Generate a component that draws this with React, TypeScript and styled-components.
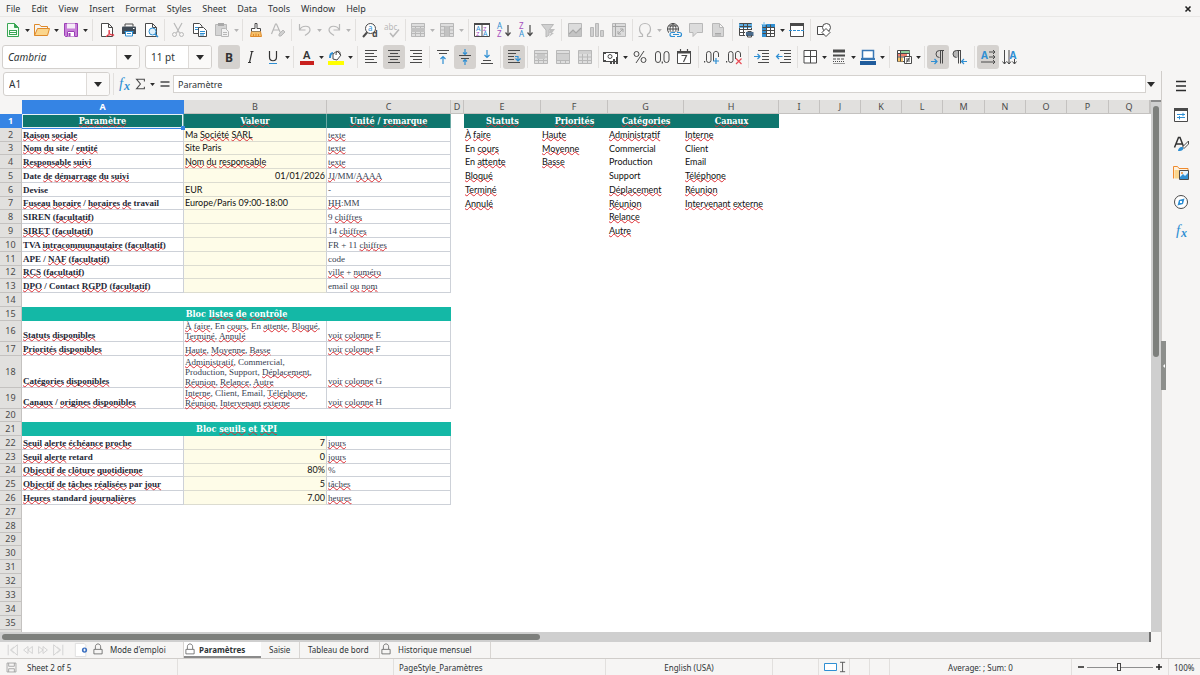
import React from "react";
import styled, { createGlobalStyle, css } from "styled-components";

const ui = `"Noto Sans", "Open Sans", sans-serif`;
const serif = `"Liberation Serif", serif`;
const slab = `"DejaVu Serif Condensed", "DejaVu Serif", serif`;
const sans = `Lato, "Open Sans", sans-serif`;

const Global = createGlobalStyle`
  *, *::before, *::after { box-sizing: border-box; }
  body { margin: 0; font-family: ${ui}; font-size: 9px; color: #2e3436; background: #f6f5f4; }
  button, input, select { font: inherit; color: inherit; margin: 0; }
  button { border: 0; padding: 0; background: none; }
`;

/* ---------- icons, all drawn in a 16 x 16 box ---------- */
const K = "#4a4a4a";
const B = "#2f8fd3";
const G = "#b8b8b8";
const P = "#a54fbd";

const s = (d: string, c: string = K, w = 1) => <path d={d} stroke={c} strokeWidth={w} fill="none" />;
const f = (d: string, c: string = K) => <path d={d} fill={c} />;
const letter = (x: number, y: number, size: number, c: string, t: string, fam: string = ui, extra: React.SVGProps<SVGTextElement> = {}) => (
  <text x={x} y={y} fontSize={size} fill={c} fontFamily={fam} {...extra}>{t}</text>
);
const doc = (c: string, fill = "#fff") => <path d="M2.5 1.5h7l4 4v9h-11zM9.5 1.5v4h4" fill={fill} stroke={c} />;
const tableGrey = (
  <>
    {f("M1 1h14v14H1z", "#dedede")}
    {s("M1.500 1.500h13v13h-13zM1.500 4.500h13M1.500 8h13M1.500 11.500h13M5.500 4.500v10M10.500 4.500v10", G)}
  </>
);

const icons: Record<string, React.ReactNode> = {
  newDoc: <>{doc("#3aa655", "#f4fff4")}{f("M9.500 1.500l4 4h-4z", "#3aa655")}{f("M4 8h8v5H4z", "#3aa655")}{s("M5 9.500h6M5 11.500h6", "#fff")}</>,
  open: <>{s("M.5 13.500v-11h5l1.500 2h6.500v2", "#df8a2a")}<path d="M3.500 6.500h12l-2 7h-13z" fill="#fbd68d" stroke="#df8a2a" /></>,
  save: <><path d="M1.500 1.500h13v13h-12l-1-1z" fill="#c77fd8" stroke="#9b3fb5" />{f("M4 1.500h8v5H4z", "#f5ecf8")}{f("M4 9h8v5.500H4z", "#fff")}{s("M4.500 9.500h7v5M4.500 9.500v5", "#9b3fb5")}{f("M5.500 11h2v3.500h-2z", "#9b3fb5")}</>,
  pdf: <>{doc(K)}{s("M7 15c3-3 4-5 3.500-6.500S9 10 11 12s4 2 4 1-4-1-8 1.500", "#e0303f", 1)}</>,
  print: <>{s("M4 4.500v-2.500h8v2.500", K)}{f("M1 5.500q0-1 1-1h12q1 0 1 1V12H1z", "#3f4a55")}{f("M4 9h8v5H4z", "#fff")}{s("M3.500 9.500h9M4.500 9.500v4.500h7v-4.500M6 11.500h4", B)}{f("M12 6h1.500v1H12z", "#fff")}</>,
  preview: <>{doc(K)}<circle cx="9.500" cy="9.500" r="3.500" fill="#dff0fb" stroke={B} />{s("M12 12l3 3", B, 1.500)}</>,
  cut: <>{s("M4 1l5.500 10M12 1L6.500 11", G, 1.200)}<circle cx="4.500" cy="12.500" r="2" fill="none" stroke={G} /><circle cx="11.500" cy="12.500" r="2" fill="none" stroke={G} /></>,
  copy: <><path d="M1.500 1.500h6l2.500 2.500v7.500h-8.500z" fill="#fff" stroke={K} />{s("M3 5.500h4M3 7.500h4", B)}<path d="M6.500 5.500h5l3 3v6h-8z" fill="#fff" stroke={K} />{s("M8 9.500h5M8 11.500h5M8 13h4", B)}</>,
  paste: <><path d="M1.500 2.500h11v11h-11z" fill="#d4d4d4" stroke={G} />{f("M4 1h6v3H4z", "#a9a9a9")}<path d="M7.500 6.500h4l3 3v5h-7z" fill="#f2f2f2" stroke={G} />{s("M9 10.500h4M9 12.500h4", G)}</>,
  brush: <><path d="M7 1.500h2v5h3.500v3h-9v-3H7z" fill="#fff" stroke={K} />{f("M3.500 9.500h9l1 5h-11z", "#f6c06a")}{s("M3.500 9.500l-1 5h11l-1-5M5.500 14v-2M8 14v-2.500M10.500 14v-2", "#df8a2a")}</>,
  clear: <>{s("M1.500 12L5.500 2h1l4 9M3 8h6", G, 1.200)}<path d="M9 12l4-4 2 2-4 4H9z" fill="#d0d0d0" stroke={G} /></>,
  undo: <>{s("M2.500 2v6h6M2.500 8C5 3 13 3 13 8c0 3-3 4-5 5.500", G, 1.200)}</>,
  redo: <>{s("M13.500 2v6h-6M13.500 8C11 3 3 3 3 8c0 3 3 4 5 5.500", G, 1.200)}</>,
  find: <><circle cx="8.500" cy="6.500" r="5" fill="#fff" stroke={K} />{s("M5 10.500L1 15", K, 2)}{letter(6, 9, 8, B, "a")}{letter(10, 15, 9, K, "d", ui, { fontWeight: 700 })}</>,
  spell: <>{letter(0, 8, 8, G, "abc")}{s("M6 11l3 3.500 6-7", G, 1.500)}</>,
  rowIns: <>{tableGrey}{f("M1 6h14v4H1z", "#c2c2c2")}</>,
  colIns: <>{tableGrey}{f("M6 4h4v11H6z", "#c2c2c2")}</>,
  sort: <><path d="M.5 1.500h15v13H.5z" fill="#fff" stroke={K} />{f("M0 1h16v2H0z", K)}{s("M8 2v13", K)}{letter(2, 9, 7, B, "A")}{letter(2, 14, 6, P, "Z")}{letter(9, 9, 6, P, "Z")}{letter(9, 14, 7, B, "A")}</>,
  az: <>{letter(1, 7, 8, B, "A")}{letter(1, 15, 8, P, "Z")}{s("M12 3v10M9.500 10.500L12 13.500l2.500-3", K, 1.200)}</>,
  za: <>{letter(1, 7, 8, P, "Z")}{letter(1, 15, 8, B, "A")}{s("M12 3v10M9.500 10.500L12 13.500l2.500-3", K, 1.200)}</>,
  filter: <><path d="M1.500 2.500h12l-4.500 5.500v5l-3 2V8z" fill="#d0d0d0" stroke={G} />{f("M10 7h5l-3 4h2l-5 4 2-4H9z", "#c0c0c0")}</>,
  image: <><path d="M1.500 1.500h13v13h-13z" fill="#dcdcdc" stroke={G} />{f("M2 14v-2l4-4 3 3 5-5v8z", "#c4c4c4")}{s("M2 12l4-4 3 3 5-5", "#a8a8a8", 1.200)}</>,
  chart: <><path d="M1.500 5.500h3v9h-3zM6.500 1.500h3v13h-3zM11.500 8.500h3v6h-3z" fill="#d0d0d0" stroke={G} /></>,
  pivot: <><path d="M1.500 1.500h13v13h-13z" fill="#dcdcdc" stroke={G} />{s("M1.500 4.500h13M4.500 1.500v13M7 12l5-5M12 10V7H9M7 9v3h3", "#a8a8a8")}</>,
  omega: <>{s("M1.500 14.500h4v-2C3 11 2.500 9 2.500 7 2.500 4 4.500 1.500 8 1.500S13.500 4 13.500 7c0 2-.5 4-3 5.500v2h4", G, 1.200)}</>,
  link: <><circle cx="7" cy="7" r="5.500" fill="#fff" stroke={K} />{s("M1.500 7h11M7 1.500v11M2.500 4h9M2.500 10h9M7 1.500c-4 3-4 8 0 11M7 1.500c4 3 4 8 0 11", K)}{f("M3 9.500h13v6H3z", "#f6f5f4")}{s("M9 10.500H6a2 2 0 000 4h3M11 10.500h2.500a2 2 0 010 4H11M7 12.500h6", B, 1.200)}</>,
  comment: <><path d="M1.500 1.500h13v9H9l-4 4v-4H1.500z" fill="#dcdcdc" stroke={G} /></>,
  headerFooter: <>{doc(G, "#d6d6d6")}{s("M5 11.500h6M5 13h6", "#a8a8a8")}</>,
  printArea: <><path d="M1.500 1.500h12v12h-12z" fill="#fff" stroke={K} />{f("M1 1h13v5H1z", "#5fb0e6")}{s("M1.500 1.500h12M1.500 4.500h12M1.500 7.500h12M1.500 10.500h12M5.500 1.500v12M9.500 1.500v12", K)}{f("M7 8h9v8H7z", "#f6f5f4")}{f("M8 10h7.500v4H8z", "#4a6a8a")}{s("M9.500 9.500h4M9.500 13v2h4v-2", K)}</>,
  freeze: <><path d="M2.500 2.500h12v12h-12z" fill="#fff" stroke={K} />{f("M2 2h13v3.500H2zM2 2h4v13H2z", B)}{s("M2.500 5.500h12M2.500 8.500h12M2.500 11.500h12M6.500 2.500v12M10.500 2.500v12", K)}{s("M4 0v5M1.500 2.500h5", "#7cc0ec")}</>,
  split: <><path d="M1.500 1.500h13v13h-13z" fill="#fff" stroke={K} />{f("M1 1h14v3H1z", K)}<path d="M0 8.500h16" stroke={B} strokeDasharray="3 1" /></>,
  shapes: <><path d="M1.500 4.500h8v8h-8z" fill="#fff" stroke={K} /><circle cx="10.500" cy="5.500" r="4" fill="#fff" stroke={K} /><path d="M10 6.500l4 4-4 4-4-4z" fill="#fff" stroke={K} /></>,

  bold: <>{letter(4, 12.500, 12, "#333", "B", ui, { fontWeight: 700 })}</>,
  italic: <>{s("M7.500 2.500h3M5 13.500h3M9 2.500L6.500 13.500", "#333", 1.200)}</>,
  underline: <>{s("M4.500 2v6c0 5 7 5 7 0V2", "#333", 1.200)}{s("M4 14.500h8", B)}</>,
  fontColor: <>{letter(4, 10, 11, "#333", "A", ui, { fontWeight: 600 })}{f("M1 12h14v4H1z", "#c9211e")}</>,
  highlight: <>{s("M2 9c0-4 1-5 3-5", B, 2)}<path d="M5 5l4-3 4 4-4 5-4-1z" fill="#fff" stroke={K} />{s("M8 6c0-5 5-5 4 0", K)}{f("M0 12h16v4H0z", "#ffff00")}</>,
  left: <>{s("M1 1.500h12M1 4.500h9M1 7.500h12M1 10.500h9M1 13.500h12")}</>,
  center: <>{s("M2 1.500h12M4 4.500h8M2 7.500h12M4 10.500h8M2 13.500h12")}</>,
  right: <>{s("M2 1.500h12M5 4.500h9M2 7.500h12M5 10.500h9M2 13.500h12")}</>,
  top: <>{s("M2 1.500h12M4 4.500h8")}{s("M8 15V8M5.500 10L8 7.500l2.500 2.500", B, 1.200)}</>,
  middle: <>{s("M2 6.500h12M4 9.500h8")}{s("M8 0v5M6 3.500l2 2 2-2M8 16v-5M6 12.500l2-2 2 2", B, 1.200)}</>,
  bottom: <>{s("M2 14.500h12M4 11.500h8")}{s("M8 1v7M5.500 6L8 8.500 10.500 6", B, 1.200)}</>,
  wrap: <>{s("M2 1.500h12M2 4.500h8M2 7.500h6M2 10.500h6M2 13.500h12")}{s("M9 7.500h3v4M9.500 9.500l2.500 2.500 2.500-2.500", B, 1.200)}</>,
  merge1: <>{tableGrey}{f("M4 5h8v5H4z", "#c8c8c8")}</>,
  merge2: <>{tableGrey}{f("M2 5h12v6H2z", "#d0d0d0")}</>,
  merge3: <>{tableGrey}{f("M2 2h12v3H2z", "#d0d0d0")}</>,
  currency: <><path d="M.5 3.500h14v9H.5z" fill="#fff" stroke={K} />{f("M0 3h3v2H0zM12 3h3v2h-3zM0 11h3v2H0z")}<circle cx="7" cy="7.500" r="2" fill="none" stroke={K} />{f("M7 12h2v3H7zM10 10h2v5h-2zM13 8h2v7h-2z")}</>,
  percent: <><circle cx="4.500" cy="5" r="2.500" fill="none" stroke={K} /><circle cx="11.500" cy="11" r="2.500" fill="none" stroke={K} />{s("M12 2L4 14")}</>,
  number: <><rect x="1.500" y="2.500" width="5" height="11" rx="2.500" fill="none" stroke={K} /><rect x="10" y="2.500" width="5" height="11" rx="2.500" fill="none" stroke={K} />{f("M7.700 12.500h1.200v2H7.700z")}</>,
  date: <><path d="M1.500 2.500h13v12h-13z" fill="#fff" stroke={K} />{f("M1 2h14v2.500H1z")}{s("M4.500 0v3M11.500 0v3M5.500 6.500h5l-3 6.500", K, 1.200)}</>,
  decAdd: <>{f("M0 12h1.200v1.500H0z")}<rect x="2.500" y="2.500" width="4.500" height="11" rx="2.200" fill="none" stroke={K} /><path d="M9.500 10V5c0-3.500 5-3.500 5 0v3M9.500 9v3" fill="none" stroke={K} />{s("M12 9v6M9 12h6", B, 1.200)}</>,
  decDel: <>{f("M0 12h1.200v1.500H0z")}<rect x="2.500" y="2.500" width="4.500" height="11" rx="2.200" fill="none" stroke={K} /><path d="M9.500 10V5c0-3.500 5-3.500 5 0v3" fill="none" stroke={K} />{s("M10 9.500l5.500 5.500M15.500 9.500L10 15", "#e84b55", 1.200)}</>,
  indentMore: <>{s("M4 1.500h11M8 4.500h7M8 7.500h7M8 10.500h7M4 13.500h11")}{s("M0 7.500h6M3.500 5L6 7.500 3.500 10", B, 1.200)}</>,
  indentLess: <>{s("M4 1.500h11M8 4.500h7M8 7.500h7M8 10.500h7M4 13.500h11")}{s("M6.500 7.500H.5M3 5L.5 7.500 3 10", B, 1.200)}</>,
  borders: <><path d="M2 1.500h12.500v12.500H2zM2 7.500h12.500M8.500 1.500v12.500" fill="#fff" stroke={K} /></>,
  borderStyle: <>{s("M2 2h12", K, 3)}{s("M2 6.500h12", K, 2)}<path d="M2 10h12" stroke={K} strokeDasharray="3 1" /><path d="M2 12.500h12" stroke={K} strokeDasharray="1 1" />{s("M2 14.500h12", "#999")}</>,
  bg: <>{f("M1 9h14v2H1z", "#3a78b5")}<path d="M2.500 1.500h11v8h-11z" fill="#fff" stroke="#3a78b5" strokeWidth="1.500" />{f("M0 12h16v4H0z", "#205c9c")}</>,
  cond: <><path d="M1.500 1.500h12v11h-12z" fill="#fff" stroke={K} />{f("M4 2h9.500v2.500H4z", "#8fd19e")}{f("M2 5h9v2.500H2z", "#f0806e")}{f("M2 8.500h5v4H2z", "#f7c46c")}{s("M1.500 4.500h12M1.500 8h12M4.500 1.500v11")}<path d="M8.500 7.500h7v7h-7z" fill="#fff" stroke={K} />{s("M10 10h4M10 12h4M13.500 8.500l-3 5")}</>,
  ltr: <>{s("M14 1.500H9.500a3.500 3.500 0 000 7M10.500 1.500v13M12.500 1.500v13", K)}{s("M1 12.500h6M4.500 10L7 12.500 4.500 15", B, 1.200)}</>,
  rtl: <>{f("M8 1.500H4.500a3.500 3.500 0 000 7H6.500V1.500z", "#b5b5b5")}{s("M9 1.500H4.500a3.500 3.500 0 000 7M6.500 1.500v13M8.500 1.500v13", K)}{s("M15 12.500h-5M12 10l-2.500 2.500L12 15", B, 1.200)}</>,
  lr: <>{letter(1, 9.500, 10, B, "A", ui, { fontWeight: 700 })}{s("M9 3h6M13 1l2 2-2 2M9 8h6M13 6l2 2-2 2M1 13h14M13 11l2 2-2 2")}</>,
  tb: <>{s("M2.500 1v14M.5 12.500L2.500 15l2-2.500M7 1v14M5 12.500L7 15l2-2.500M12.500 10v5M10.500 12.500l2 2.500 2-2.500")}{letter(7.500, 9.500, 10, B, "A", ui, { fontWeight: 700 })}</>,

  fx: <>{letter(3, 12, 15, B, "f", serif, { fontStyle: "italic" })}{letter(8, 14, 12, B, "x", serif, { fontStyle: "italic", fontWeight: 700 })}</>,
  sigma: <>{s("M13 5V2.500H4l4.500 5.500L4 13.500h9V11", K, 1.200)}</>,
  equals: <>{s("M3.500 6h9M3.500 10h9", K, 1.500)}</>,

  menu: <>{s("M3 3.500h10M3 8h10M3 12.500h10", "#2b2b2b", 1.600)}</>,
  properties: <><path d="M1.500 1.500h13v13h-13z" fill="#fff" stroke={K} />{f("M1 1h14v3H1z")}{s("M4 7.500h8M4 10.500h8M10 5.800v3.400M6.500 9v3.400", B)}</>,
  stylesDeck: <>{s("M1.500 11.500L5.500 1.500h1.500l3.500 9M3 8h6", "#333", 1.500)}<path d="M15.500 5L9.500 11l1.500 1.500L15.500 8z" fill="#fff" stroke={K} />{f("M5 15c0-3 3-5 5-3.500 1.500 2-2 4-5 3.500z", B)}</>,
  gallery: <><path d="M.5 13.500v-12h4l1.500 2h9v3" fill="#fff3e0" stroke="#ee8a2f" />{f("M1.500 5h8v8.500h-8z", "#fbd68d")}<path d="M6.500 5.500h9v9h-9z" fill="#e6f3fc" stroke={K} />{f("M7 14v-2l3-3 2 2 3-3v6z", B)}<circle cx="9" cy="8" r="1" fill="#ee8a2f" /></>,
  navigator: <><circle cx="8" cy="8" r="6.500" fill="#fff" stroke={K} /><path d="M11.500 4.500L10 10l-5.500 1.500L6 6z" fill={B} />{f("M7 7h2v2H7z", "#fff")}</>,

  docSave: <>{s("M2.500 2.500h11v11h-11zM4.500 2.500v4h7v-4M4.500 13.500v-4h7v4", "#9a9a9a")}</>,
  lock: <>{s("M4.500 8V5c0-5 7-5 7 0v3M2.500 8.500h11v6h-11z", "#555")}</>,
  addSheet: <><path d="M1.500.5h10l2 2v13h-12z" fill="#fff" stroke="#ddd" /><circle cx="12" cy="8" r="3" fill="#3a6fc0" />{s("M10.500 8h3M12 6.500v3", "#fff")}</>,
  first: <>{s("M2.500 2v12M13 2L6 8l7 6V2M9 4.500L5 8l4 3.500", "#cfcfcf")}</>,
  prev: <>{s("M13 4L8 8l5 4V4M8 4L3 8l5 4V4", "#cfcfcf")}</>,
  next: <>{s("M3 4l5 4-5 4V4M8 4l5 4-5 4V4", "#cfcfcf")}</>,
  last: <>{s("M13.500 2v12M3 2l7 6-7 6V2M7 4.500L11 8l-4 3.500", "#cfcfcf")}</>,
};

const Svg = styled.svg<{ $size?: number }>`
  width: ${(p) => p.$size ?? 16}px;
  height: ${(p) => p.$size ?? 16}px;
  flex: none;
  display: block;
  overflow: visible;
`;
const Icon = ({ name, size }: { name: string; size?: number }) => (
  <Svg viewBox="0 0 16 16" $size={size} aria-hidden="true">{icons[name]}</Svg>
);
const CaretSvg = styled.svg<{ $large?: boolean }>`
  width: ${(p) => (p.$large ? 8 : 5)}px;
  height: ${(p) => (p.$large ? 5 : 3)}px;
  display: block;
`;
const Caret = ({ off, large }: { off?: boolean; large?: boolean }) => (
  <CaretSvg viewBox="0 0 8 5" $large={large} aria-hidden="true">
    <path d="M0 0h8L4 5z" fill={off ? "#b5b5b5" : "#2b2b2b"} />
  </CaretSvg>
);

/* ---------- frame ---------- */
const Window = styled.div`
  display: flex;
  flex-direction: column;
  height: 100vh;
  overflow: hidden;
`;
const MenuBar = styled.nav`
  display: flex;
  align-items: center;
  gap: 11px;
  height: 17px;
  padding: 1px 6px 0;
  border-bottom: 1px solid #e9e8e6;
`;
const MenuItem = styled.button`
  line-height: 14px;
`;
const CloseButton = styled.button`
  display: grid;
  place-items: center;
  width: 12px;
  height: 12px;
  margin-left: auto;
`;
const Toolbar = styled.div<{ $h: number }>`
  display: flex;
  align-items: center;
  height: ${(p) => p.$h}px;
  padding: 0 2px;
`;
const ToolButton = styled.button<{ $on?: boolean }>`
  display: grid;
  place-items: center;
  flex: none;
  width: 22px;
  height: 24px;
  border-radius: 3px;
  ${(p) => p.$on && css`background: #d5d2cf;`}
`;
const CaretButton = styled.button`
  display: grid;
  place-items: center;
  flex: none;
  width: 7px;
  height: 24px;
`;
const Divider = styled.span<{ $w: number }>`
  flex: none;
  display: flex;
  justify-content: center;
  width: ${(p) => p.$w}px;
  height: 22px;
  &::before {
    content: "";
    width: 1px;
    background: #e2e0de;
  }
`;
const Combo = styled.label<{ $w: number; $gap: number }>`
  position: relative;
  display: flex;
  flex: none;
  width: ${(p) => p.$w}px;
  height: 24px;
  margin-right: ${(p) => p.$gap}px;
  border: 1px solid #d3d0cd;
  border-radius: 3px;
  background: #fff;
  overflow: hidden;
`;
const ComboSelect = styled.select<{ $italic?: boolean }>`
  appearance: none;
  width: 100%;
  border: 0;
  outline: 0;
  padding: 0 24px 0 5px;
  background: transparent;
  font-size: 10px;
  font-style: ${(p) => (p.$italic ? "italic" : "normal")};
`;
const ComboArrow = styled.span`
  position: absolute;
  inset: 0 0 0 auto;
  display: grid;
  place-items: center;
  width: 23px;
  border-left: 1px solid #dedbd8;
  background: #faf9f8;
  pointer-events: none;
`;
const Middle = styled.div`
  display: flex;
  flex: 1;
  min-height: 0;
`;
const Main = styled.main`
  display: flex;
  flex-direction: column;
  flex: 1;
  min-width: 0;
`;
const FormulaBar = styled.div`
  display: flex;
  align-items: center;
  height: 29px;
  padding: 0 5px 3px 3px;
`;
const SmallButton = styled.button<{ $w: number }>`
  display: grid;
  place-items: center;
  flex: none;
  width: ${(p) => p.$w}px;
  height: 22px;
`;
const FormulaInput = styled.input`
  flex: 1;
  min-width: 0;
  height: 18px;
  padding: 0 4px;
  border: 1px solid #d5d2cf;
  border-radius: 0;
  outline: 0;
  background: #fff;
`;
const SheetArea = styled.div`
  display: flex;
  flex: 1;
  min-height: 0;
`;
const GridPane = styled.div`
  flex: 1;
  min-width: 0;
  overflow: hidden;
  background: #fff;
`;
const VTrack = styled.div`
  width: 10px;
  padding: 4px 2px;
  background: #cfcfcf;
  border-top: 2px solid #8b8b8b;
`;
const VThumb = styled.div`
  width: 6px;
  height: 48%;
  border-radius: 3px;
  background: #7d7f7c;
`;
const HTrack = styled.div`
  height: 10px;
  margin-right: 10px;
  padding: 2px;
  background: #cfcfcf;
  border-right: 2px solid #6f6f6f;
`;
const HThumb = styled.div`
  width: 47%;
  height: 6px;
  border-radius: 3px;
  background: #7d7f7c;
`;
const SideBar = styled.aside`
  position: relative;
  display: flex;
  flex-direction: column;
  align-items: center;
  gap: 5px;
  flex: none;
  width: 39px;
  padding-top: 3px;
  border-left: 1px solid #d0cdca;
`;
const SideButton = styled.button`
  display: grid;
  place-items: center;
  width: 24px;
  height: 24px;
`;
const SideHandle = styled.span`
  position: absolute;
  top: 46%;
  left: -1px;
  display: grid;
  place-items: center;
  width: 5px;
  height: 49px;
  background: #8d8f8c;
`;

/* ---------- sheet ---------- */
const Sheet = styled.table`
  width: 100%;
  table-layout: fixed;
  border-collapse: separate;
  border-spacing: 0;
`;
const ColHead = styled.th<{ $on?: boolean }>`
  height: 14px;
  padding: 0;
  border-right: 1px solid #c4c2c0;
  border-bottom: 1px solid #c4c2c0;
  background: #e1e0de;
  color: #4a4a4a;
  font-weight: 400;
  line-height: 12px;
  ${(p) => p.$on && css`background: #3584e4; border-color: #3584e4; color: #fff; font-weight: 700;`}
`;
const Corner = styled.td`
  padding: 0;
  background: #f6f5f4;
`;
const RowHead = styled(ColHead)<{ $h: number }>`
  height: ${(p) => p.$h}px;
`;
const line = "1px solid #cdd1d8";
const kinds = {
  head: css`background: #0f766e; color: #fff; font: 700 9px/13px ${slab}; text-align: center; border-right: 1px solid #6ba9a4;`,
  listHead: css`background: #0f766e; color: #fff; font: 700 9px/13px ${slab}; text-align: center;`,
  block: css`background: #14b8a6; color: #fff; font: 700 9px/13px ${slab}; text-align: center;`,
  label: css`font: 700 9px/11px ${serif}; color: #1f2937; border-right: ${line}; border-bottom: ${line};`,
  value: css`font: 9px/12px ${sans}; color: #111; background: #fefce8; vertical-align: middle; border-right: ${line}; border-bottom: 1px solid #dcdcd0;`,
  number: css`font: 9px/12px ${sans}; color: #111; background: #fefce8; vertical-align: middle; text-align: right; border-right: ${line}; border-bottom: 1px solid #dcdcd0;`,
  note: css`font: 9px/11px ${serif}; color: #374151; border-right: ${line}; border-bottom: ${line};`,
  wrapped: css`font: 9px/10px ${serif}; color: #374151; border-right: ${line}; border-bottom: ${line};`,
  list: css`font: 9px/12px ${sans}; color: #111; vertical-align: middle;`,
  blank: css``,
};
type Kind = keyof typeof kinds;
const Cell = styled.td<{ $kind: Kind; $active?: boolean }>`
  padding: 0 1px;
  vertical-align: bottom;
  white-space: pre;
  ${(p) => kinds[p.$kind]}
  ${(p) => p.$active && css`position: relative; box-shadow: inset 0 0 0 1px #e8f2f8, 0 1px 0 #3584e4;`}
`;
const FillHandle = styled.span`
  position: absolute;
  right: -2px;
  bottom: -2px;
  width: 4px;
  height: 4px;
  background: #3584e4;
`;
const Misspelt = styled.span`
  text-decoration: underline wavy #dc2f35 1px;
  text-decoration-skip-ink: none;
  text-underline-offset: -1px;
`;

/* "~" in front of a word marks it for the spelling checker */
const spell = (t: string) =>
  t.split(/(~[\p{L}]+)/u).map((part, i) =>
    part.startsWith("~") ? <Misspelt key={i}>{part.slice(1)}</Misspelt> : part
  );

const columns: [string, number][] = [
  ["A", 162], ["B", 143], ["C", 124], ["D", 13], ["E", 77], ["F", 67], ["G", 76], ["H", 95],
  ["I", 41], ["J", 41], ["K", 41], ["L", 41], ["M", 42], ["N", 41], ["O", 41], ["P", 42], ["Q", 41],
];

const rowHeights = [
  14, 14, 13, 14, 14, 14, 13, 14, 14, 14, 14, 13, 14, 14, 14, 21, 14, 32, 21, 13, 14, 14, 14, 13, 14, 14,
  14, 14, 13, 14, 14, 14, 14, 14, 14, 14,
];

type Block = { kinds: [Kind, Kind, Kind]; cells: [string, string, string] } | { title: string };
const fr = (a: string, b: string, c: string, k: Kind = "value"): Block => ({ kinds: ["label", k, "note"], cells: [a, b, c] });
const blocks: Record<number, Block> = {
  1: { kinds: ["head", "head", "head"], cells: ["~Paramètre", "~Valeur", "~Unité / ~remarque"] },
  2: fr("~Raison ~sociale", "Ma ~Société ~SARL", "~texte"),
  3: fr("~Nom ~du site / ~entité", "Site Paris", "~texte"),
  4: fr("~Responsable ~suivi", "~Nom ~du ~responsable", "~texte"),
  5: fr("Date ~de ~démarrage ~du ~suivi", "01/01/2026", "~JJ/MM/~AAAA", "number"),
  6: fr("Devise", "EUR", "-"),
  7: fr("~Fuseau ~horaire / ~horaires ~de travail", "Europe/Paris 09:00-18:00", "~HH:MM"),
  8: fr("SIREN (~facultatif)", "", "9 ~chiffres"),
  9: fr("~SIRET (~facultatif)", "", "14 ~chiffres"),
  10: fr("TVA ~intracommunautaire (~facultatif)", "", "FR + 11 ~chiffres"),
  11: fr("APE / ~NAF (~facultatif)", "", "code"),
  12: fr("~RCS (~facultatif)", "", "~ville + ~numéro"),
  13: fr("~DPO / Contact ~RGPD (~facultatif)", "", "email ~ou ~nom"),
  15: { title: "Bloc ~listes ~de ~contrôle" },
  16: fr("~Statuts ~disponibles", "~À ~faire, En ~cours, En ~attente, ~Bloqué,\n~Terminé, ~Annulé", "~voir ~colonne E", "wrapped"),
  17: fr("~Priorités ~disponibles", "~Haute, ~Moyenne, ~Basse", "~voir ~colonne F", "wrapped"),
  18: fr("~Catégories ~disponibles", "~Administratif, Commercial,\nProduction, Support, ~Déplacement,\n~Réunion, ~Relance, ~Autre", "~voir ~colonne G", "wrapped"),
  19: fr("~Canaux / ~origines ~disponibles", "~Interne, Client, Email, ~Téléphone,\n~Réunion, ~Intervenant ~externe", "~voir ~colonne H", "wrapped"),
  21: { title: "Bloc ~seuils ~et ~KPI" },
  22: fr("~Seuil ~alerte ~échéance ~proche", "7", "~jours", "number"),
  23: fr("~Seuil ~alerte retard", "0", "~jours", "number"),
  24: fr("~Objectif ~de ~clôture ~quotidienne", "80%", "%", "number"),
  25: fr("~Objectif ~de ~tâches ~réalisées par ~jour", "5", "~tâches", "number"),
  26: fr("~Heures standard ~journalières", "7.00", "~heures", "number"),
};
const lists: string[][] = [
  ["~Statuts", "~À ~faire", "En ~cours", "En ~attente", "~Bloqué", "~Terminé", "~Annulé"],
  ["~Priorités", "~Haute", "~Moyenne", "~Basse"],
  ["~Catégories", "~Administratif", "Commercial", "Production", "Support", "~Déplacement", "~Réunion", "~Relance", "~Autre"],
  ["~Canaux", "~Interne", "Client", "Email", "~Téléphone", "~Réunion", "~Intervenant ~externe"],
];

const SheetRow = ({ n, h }: { n: number; h: number }) => {
  const b = blocks[n];
  return (
    <tr>
      <RowHead scope="row" $h={h} $on={n === 1}>{n}</RowHead>
      {!b && <Cell $kind="blank" colSpan={3} />}
      {b && "title" in b && <Cell $kind="block" colSpan={3}>{spell(b.title)}</Cell>}
      {b && "cells" in b && b.cells.map((t, i) => (
        <Cell key={i} $kind={b.kinds[i]} $active={n === 1 && i === 0}>
          {spell(t)}
          {n === 1 && i === 0 && <FillHandle />}
        </Cell>
      ))}
      <Cell $kind="blank" />
      {lists.map((l, i) => (
        <Cell key={i} $kind={n === 1 ? "listHead" : "list"}>{l[n - 1] ? spell(l[n - 1]) : null}</Cell>
      ))}
      <Cell $kind="blank" colSpan={10} />
    </tr>
  );
};

/* ---------- bottom ---------- */
const TabBar = styled.div`
  display: flex;
  align-items: stretch;
  height: 16px;
  padding-left: 5px;
  font-size: 8px;
`;
const TabNav = styled.button`
  display: grid;
  place-items: center;
  width: 15px;
`;
const AddTab = styled.button`
  display: grid;
  place-items: center;
  width: 14px;
  margin: 0 4px 0 9px;
`;
const Tab = styled.button<{ $w: number; $on?: boolean }>`
  display: flex;
  align-items: center;
  justify-content: flex-start;
  gap: 3px;
  width: ${(p) => p.$w}px;
  padding-bottom: 2px;
  border-right: 1px solid #d8d5d2;
  ${(p) => p.$on && css`background: #fff; font-weight: 700; border-right: 0; box-shadow: inset 0 -2px #8b8b8b;`}
`;
const TabText = styled.span<{ $pad: number }>`
  padding-left: ${(p) => p.$pad}px;
  white-space: nowrap;
`;
const StatusBar = styled.footer`
  display: grid;
  grid-template-columns: 22px 156px 216px 212px 167px 46px 31px 20px 20px 1fr 97px 31px;
  height: 17px;
  border-top: 1px solid #d0cdca;
  font-size: 8px;
`;
const Status = styled.div<{ $align?: string; $plain?: boolean }>`
  display: flex;
  align-items: center;
  justify-content: ${(p) => p.$align ?? "flex-start"};
  padding: 0 5px;
  margin-bottom: 1px;
  border-right: ${(p) => (p.$plain ? 0 : "1px solid #e2e0de")};
  white-space: nowrap;
`;
const ZoomBox = styled(Status)`
  gap: 2px;
`;
const ZoomSlider = styled.input`
  appearance: none;
  flex: 1;
  min-width: 0;
  height: 12px;
  background: linear-gradient(#8f8f8f, #8f8f8f) center / 100% 1px no-repeat;
  &::-webkit-slider-thumb {
    appearance: none;
    width: 4px;
    height: 8px;
    border: 1px solid #444;
    background: #f6f5f4;
  }
`;

type Tool = { icon: string; caret?: boolean; off?: boolean; on?: boolean; label: string };
type Item = Tool | number;
const it = (icon: string, label: string, o: { caret?: boolean; off?: boolean; on?: boolean } = {}): Tool => ({ icon, label, ...o });

/* a number is a divider of that width */
const standard: Item[] = [
  it("newDoc", "New", { caret: true }), it("open", "Open", { caret: true }), it("save", "Save", { caret: true }), 7,
  it("pdf", "Export as PDF"), it("print", "Print"), it("preview", "Print preview"), 5,
  it("cut", "Cut"), it("copy", "Copy"), it("paste", "Paste", { caret: true, off: true }), 5,
  it("brush", "Clone formatting"), it("clear", "Clear formatting"), 5,
  it("undo", "Undo", { caret: true, off: true }), it("redo", "Redo", { caret: true, off: true }), 7,
  it("find", "Find and replace"), it("spell", "Spelling"), 4,
  it("rowIns", "Row", { caret: true, off: true }), it("colIns", "Column", { caret: true, off: true }), 6,
  it("sort", "Sort"), it("az", "Sort ascending"), it("za", "Sort descending"), it("filter", "AutoFilter"), 5,
  it("image", "Insert image"), it("chart", "Insert chart"), it("pivot", "Pivot table"), 4,
  it("omega", "Special character", { caret: true, off: true }), it("link", "Hyperlink"), it("comment", "Comment"), it("headerFooter", "Headers and footers"), 6,
  it("printArea", "Print area"), it("freeze", "Freeze rows and columns", { caret: true }), it("split", "Split window"), 5,
  it("shapes", "Draw functions"),
];
const formatting: Item[] = [
  it("bold", "Bold", { on: true }), it("italic", "Italic"), it("underline", "Underline", { caret: true }), 5,
  it("fontColor", "Font color", { caret: true }), it("highlight", "Background color", { caret: true }), 7,
  it("left", "Align left"), it("center", "Center", { on: true }), it("right", "Align right"), 5,
  it("top", "Align top"), it("middle", "Center vertically", { on: true }), it("bottom", "Align bottom"), 5,
  it("wrap", "Wrap text", { on: true }), 5,
  it("merge1", "Merge and center"), it("merge2", "Merge cells"), it("merge3", "Unmerge cells"), 4,
  it("currency", "Currency", { caret: true }), it("percent", "Percent"), it("number", "Number"), it("date", "Date"), 6,
  it("decAdd", "Add decimal place"), it("decDel", "Delete decimal place"), 6,
  it("indentMore", "Increase indent"), it("indentLess", "Decrease indent"), 4,
  it("borders", "Borders", { caret: true }), it("borderStyle", "Border style", { caret: true }), it("bg", "Border color", { caret: true }), 7,
  it("cond", "Conditional", { caret: true }), 5,
  it("ltr", "Left to right", { on: true }), it("rtl", "Right to left"), 6,
  it("lr", "Text direction horizontal", { on: true }), it("tb", "Text direction vertical"),
];

const Tools = ({ items }: { items: Item[] }) => (
  <>
    {items.map((x, i) =>
      typeof x === "number" ? <Divider key={i} $w={x} /> : (
        <React.Fragment key={i}>
          <ToolButton type="button" aria-label={x.label} $on={x.on}><Icon name={x.icon} /></ToolButton>
          {x.caret && <CaretButton type="button" aria-label={`${x.label} options`}><Caret off={x.off} /></CaretButton>}
        </React.Fragment>
      )
    )}
  </>
);

const ComboBox = ({ label, value, w, gap, italic }: { label: string; value: string; w: number; gap: number; italic?: boolean }) => (
  <Combo $w={w} $gap={gap}>
    <ComboSelect aria-label={label} defaultValue={value} $italic={italic}><option>{value}</option></ComboSelect>
    <ComboArrow><Caret large /></ComboArrow>
  </Combo>
);

export default function App() {
  return (
    <Window>
      <Global />
      <MenuBar>
        {["File", "Edit", "View", "Insert", "Format", "Styles", "Sheet", "Data", "Tools", "Window", "Help"].map((m) => (
          <MenuItem key={m} type="button">{m}</MenuItem>
        ))}
        <CloseButton type="button" aria-label="Close document">
          <Svg viewBox="0 0 8 8" $size={8}><path d="M1.500 1.500l5 5M6.500 1.500l-5 5" stroke="#222" strokeWidth="1.600" /></Svg>
        </CloseButton>
      </MenuBar>
      <Toolbar $h={26}><Tools items={standard} /></Toolbar>
      <Toolbar $h={28}>
        <ComboBox label="Font name" value="Cambria" w={138} gap={5} italic />
        <ComboBox label="Font size" value="11 pt" w={67} gap={6} />
        <Tools items={formatting} />
      </Toolbar>
      <Middle>
        <Main>
          <FormulaBar>
            <ComboBox label="Name box" value="A1" w={107} gap={1} />
            <Divider $w={5} />
            <SmallButton type="button" aria-label="Function wizard" $w={16}><Icon name="fx" /></SmallButton>
            <SmallButton type="button" aria-label="Select function" $w={16}><Icon name="sigma" size={14} /></SmallButton>
            <SmallButton type="button" aria-label="Function options" $w={9}><Caret /></SmallButton>
            <SmallButton type="button" aria-label="Formula" $w={16}><Icon name="equals" /></SmallButton>
            <FormulaInput aria-label="Input line" defaultValue="Paramètre" />
            <SmallButton type="button" aria-label="Expand formula bar" $w={10}><Caret large /></SmallButton>
          </FormulaBar>
          <SheetArea>
            <GridPane>
              <Sheet>
                <colgroup>
                  <col width={22} />
                  {columns.map(([c, w]) => <col key={c} width={w} />)}
                  <col />
                </colgroup>
                <thead>
                  <tr>
                    <Corner />
                    {columns.map(([c]) => <ColHead key={c} scope="col" $on={c === "A"}>{c}</ColHead>)}
                    <ColHead as="td" />
                  </tr>
                </thead>
                <tbody>{rowHeights.map((h, i) => <SheetRow key={i} n={i + 1} h={h} />)}</tbody>
              </Sheet>
            </GridPane>
            <VTrack><VThumb /></VTrack>
          </SheetArea>
          <HTrack><HThumb /></HTrack>
          <TabBar>
            {["first", "prev", "next", "last"].map((n) => (
              <TabNav key={n} type="button" aria-label={`${n} sheet`}><Icon name={n} size={14} /></TabNav>
            ))}
            <AddTab type="button" aria-label="Add sheet"><Icon name="addSheet" size={14} /></AddTab>
            <Tab type="button" $w={92}><Icon name="lock" size={12} /><TabText $pad={3}>Mode d'emploi</TabText></Tab>
            <Tab type="button" $w={77} $on><Icon name="lock" size={12} /><TabText $pad={0}>Paramètres</TabText></Tab>
            <Tab type="button" $w={39}><TabText $pad={8}>Saisie</TabText></Tab>
            <Tab type="button" $w={80}><TabText $pad={8}>Tableau de bord</TabText></Tab>
            <Tab type="button" $w={111}><Icon name="lock" size={12} /><TabText $pad={3}>Historique mensuel</TabText></Tab>
          </TabBar>
        </Main>
        <SideBar>
          {[["menu", "Sidebar settings"], ["properties", "Properties"], ["stylesDeck", "Styles"], ["gallery", "Gallery"], ["navigator", "Navigator"], ["fx", "Functions"]].map(([n, l]) => (
            <SideButton key={n} type="button" aria-label={l}><Icon name={n} /></SideButton>
          ))}
          <SideHandle><Svg viewBox="0 0 4 4" $size={4}><path d="M3 0v4L1 2z" fill="#fff" /></Svg></SideHandle>
        </SideBar>
      </Middle>
      <StatusBar>
        <Status $plain><Icon name="docSave" size={13} /></Status>
        <Status>Sheet 2 of 5</Status>
        <Status />
        <Status>PageStyle_Paramètres</Status>
        <Status $align="center">English (USA)</Status>
        <Status />
        <Status>
          <Svg viewBox="0 0 16 16" $size={16}><path d="M.5 4.500h12v7H.5z" fill="#fff" stroke={B} /></Svg>
          <Svg viewBox="0 0 14 14" $size={12}><path d="M0 1.500h6M0 12.500h6M3 1.500v11" stroke={K} fill="none" /></Svg>
        </Status>
        <Status /><Status />
        <Status $align="center">Average: ; Sum: 0</Status>
        <ZoomBox>
          <Svg viewBox="0 0 8 8" $size={8}><path d="M1 4h6" stroke="#222" strokeWidth="1.500" /></Svg>
          <ZoomSlider type="range" min={0} max={100} defaultValue={49} aria-label="Zoom" />
          <Svg viewBox="0 0 8 8" $size={8}><path d="M1 4h6M4 1v6" stroke="#222" strokeWidth="1.500" /></Svg>
        </ZoomBox>
        <Status $plain>100%</Status>
      </StatusBar>
    </Window>
  );
}
